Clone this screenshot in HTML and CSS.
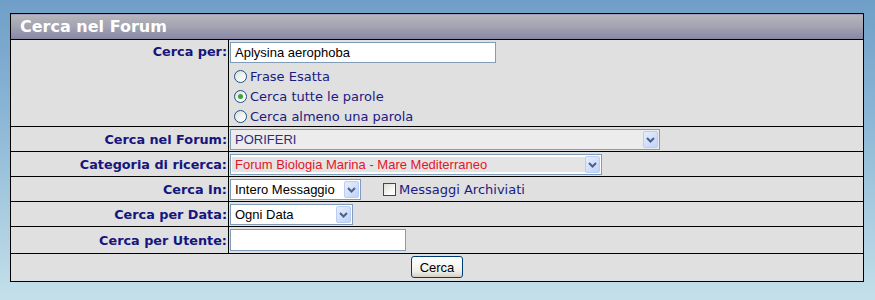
FILE: index.html
```html
<!DOCTYPE html>
<html lang="it">
<head>
    <meta charset="UTF-8">
    <title>Cerca nel Forum</title>
    <link rel="stylesheet" href="styles.css">
</head>
<body>
    <table class="search-table">
        <tr>
            <th class="head" colspan="2">Cerca nel Forum</th>
        </tr>
        <tr class="row-tall">
            <td class="label">Cerca per:</td>
            <td class="field">
                <div class="textbox wide">Aplysina aerophoba</div>
                <div class="radio-list">
                    <label class="option"><span class="radio"></span>Frase Esatta</label>
                    <label class="option"><span class="radio checked"></span>Cerca tutte le parole</label>
                    <label class="option"><span class="radio"></span>Cerca almeno una parola</label>
                </div>
            </td>
        </tr>
        <tr>
            <td class="label">Cerca nel Forum:</td>
            <td class="field">
                <div class="select forum disabled">
                    <span class="select-text">PORIFERI</span>
                    <span class="arrow"><svg width="9" height="6" viewBox="0 0 9 6"><path d="M1 1l3.5 3.5L8 1" fill="none" stroke="#4d6185" stroke-width="2"/></svg></span>
                </div>
            </td>
        </tr>
        <tr>
            <td class="label">Categoria di ricerca:</td>
            <td class="field">
                <div class="select category">
                    <span class="select-text red">Forum Biologia Marina - Mare Mediterraneo</span>
                    <span class="arrow"><svg width="9" height="6" viewBox="0 0 9 6"><path d="M1 1l3.5 3.5L8 1" fill="none" stroke="#4d6185" stroke-width="2"/></svg></span>
                </div>
            </td>
        </tr>
        <tr>
            <td class="label">Cerca In:</td>
            <td class="field">
                <div class="inline">
                    <div class="select cerca-in">
                        <span class="select-text">Intero Messaggio</span>
                        <span class="arrow"><svg width="9" height="6" viewBox="0 0 9 6"><path d="M1 1l3.5 3.5L8 1" fill="none" stroke="#4d6185" stroke-width="2"/></svg></span>
                    </div>
                    <label class="option archive"><span class="checkbox"></span>Messaggi Archiviati</label>
                </div>
            </td>
        </tr>
        <tr>
            <td class="label">Cerca per Data:</td>
            <td class="field">
                <div class="select data">
                    <span class="select-text">Ogni Data</span>
                    <span class="arrow"><svg width="9" height="6" viewBox="0 0 9 6"><path d="M1 1l3.5 3.5L8 1" fill="none" stroke="#4d6185" stroke-width="2"/></svg></span>
                </div>
            </td>
        </tr>
        <tr class="row-user">
            <td class="label">Cerca per Utente:</td>
            <td class="field">
                <div class="textbox user"></div>
            </td>
        </tr>
        <tr class="row-button">
            <td class="actions" colspan="2">
                <button class="btn">Cerca</button>
            </td>
        </tr>
    </table>
</body>
</html>
```

FILE: styles.css
```css
/* Base */
body {
    margin: 0;
    padding: 13px 0 0 10px;
    height: 300px;
    box-sizing: border-box;
    background: linear-gradient(to bottom, #6f9fc8 0%, #8cb7d6 40%, #c4e0ea 100%);
    font-family: "DejaVu Sans", Verdana, sans-serif;
}

/* Table */
.search-table {
    width: 854px;
    border-collapse: collapse;
    border: 1px solid #000;
    background-color: #e0e0e0;
}

.search-table td,
.search-table th {
    border: 1px solid #000;
    padding: 0;
    box-sizing: border-box;
}

.head {
    height: 26px;
    padding: 0 0 0 9px !important;
    text-align: left;
    color: #fff;
    font-size: 16px;
    font-weight: bold;
    background: linear-gradient(to bottom, #b6b6bc 0%, #a2a2b2 50%, #8686a4 100%);
}

.label {
    width: 218px;
    padding: 0 1px 0 0 !important;
    text-align: right;
    vertical-align: middle;
    color: #15157d;
    font-size: 12.8px;
    font-weight: bold;
}

.row-tall .label {
    vertical-align: top;
    padding-top: 4px !important;
}

.field {
    padding: 2px 1px 1px 1px !important;
    vertical-align: top;
}

.row-tall .field {
    padding: 2px 1px 0 1px !important;
}

.row-user .field {
    padding: 2px 1px 2px 1px !important;
}

/* Inputs */
.textbox {
    height: 21px;
    box-sizing: border-box;
    border: 1px solid #7f9db9;
    background-color: #fff;
    font-family: "Liberation Sans", Arial, sans-serif;
    font-size: 13px;
    line-height: 19px;
    padding-left: 4px;
}

.textbox.wide {
    width: 266px;
}

.textbox.user {
    width: 176px;
    height: 22px;
}

.radio-list {
    padding: 3px 0 0 4px;
}

.option {
    display: flex;
    align-items: center;
    height: 20px;
    font-size: 13px;
    color: #1a1a80;
}

.radio {
    width: 11px;
    height: 11px;
    margin-right: 3px;
    border: 1px solid #1c5180;
    border-radius: 50%;
    background: linear-gradient(135deg, #dcdcd6 0%, #fff 80%);
    position: relative;
}

.radio.checked::after {
    content: "";
    position: absolute;
    left: 3px;
    top: 3px;
    width: 5px;
    height: 5px;
    border-radius: 50%;
    background-color: #3ca33c;
}

.checkbox {
    width: 11px;
    height: 11px;
    margin-right: 3px;
    border: 1px solid #1c5180;
    background: linear-gradient(135deg, #dcdcd6 0%, #fff 80%);
}

/* Selects */
.select {
    display: flex;
    align-items: center;
    height: 21px;
    box-sizing: border-box;
    border: 1px solid #7f9db9;
    background-color: #fff;
    padding: 1px;
    font-family: "Liberation Sans", Arial, sans-serif;
    font-size: 13px;
}

.select-text {
    flex: 1;
    padding-left: 3px;
    color: #000;
    white-space: nowrap;
    overflow: hidden;
}

.select.disabled {
    background-color: #ececec;
}

.select.disabled .select-text {
    color: #2c2c80;
}

.select-text.red {
    color: #e4142a;
}

.select.category .select-text {
    background-color: #e4e4e4;
}

.arrow {
    width: 15px;
    height: 17px;
    display: flex;
    align-items: center;
    justify-content: center;
    border: 1px solid #b9cdf7;
    border-radius: 2px;
    box-sizing: border-box;
    background: linear-gradient(135deg, #e6eefc 0%, #c1d3fb 100%);
}

.select.forum {
    width: 430px;
}

.select.category {
    width: 372px;
}

.select.cerca-in {
    width: 131px;
}

.select.data {
    width: 123px;
}

.inline {
    display: flex;
    align-items: center;
}

.archive {
    margin-left: 22px;
}

/* Button */
.actions {
    height: 28px;
    padding: 2px 0 0 0 !important;
    text-align: center;
    vertical-align: top;
}

.btn {
    width: 52px;
    height: 22px;
    padding: 0;
    border: 1px solid #003c74;
    border-radius: 3px;
    background: linear-gradient(to bottom, #fff 0%, #f0f0ea 70%, #d6d0c5 100%);
    font-family: "Liberation Sans", Arial, sans-serif;
    font-size: 13px;
    color: #000;
}
```
